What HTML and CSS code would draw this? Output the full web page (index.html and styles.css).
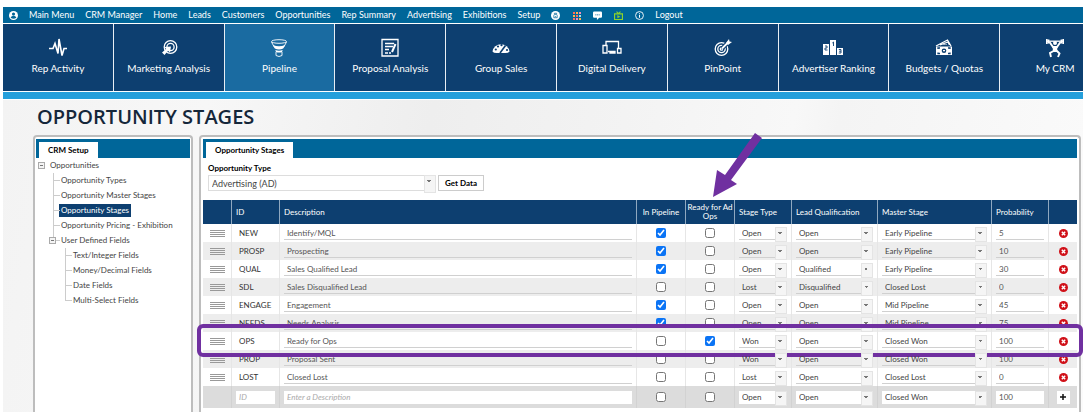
FILE: index.html
```html
<!DOCTYPE html>
<html lang="en">
<head>
<meta charset="utf-8">
<title>Opportunity Stages</title>
<link rel="stylesheet" href="styles.css">
</head>
<body>
<div class="page">
  <nav class="topbar" aria-label="Main">
    <a href="#" class="icon-link" aria-label="Account"><svg class="ic" viewBox="0 0 16 16"><circle cx="8" cy="8" r="8" fill="#fff"/><circle cx="8" cy="5.500" r="2.800" fill="#069"/><path d="M3 12c0-4 10-4 10 0q-5 3.500-10 0" fill="#069"/></svg></a>
    <a href="#">Main Menu</a><a href="#">CRM Manager</a><a href="#">Home</a><a href="#">Leads</a><a href="#">Customers</a><a href="#">Opportunities</a><a href="#">Rep Summary</a><a href="#">Advertising</a><a href="#">Exhibitions</a><a href="#">Setup</a>
    <span class="tools">
      <a href="#" class="icon-link" aria-label="Assistant"><svg class="ic" viewBox="0 0 16 16"><circle cx="8" cy="8" r="8" fill="#fff"/><path d="M6 4h4v3l1 1v4H5V8l1-1zM7 6h2M7 10h2" fill="none" stroke="#069" stroke-width="1.300"/></svg></a>
      <a href="#" class="icon-link" aria-label="Apps"><svg class="ic" viewBox="0 0 9 9"><path d="M1 1h2v2H1zM4 4h2v2H4zM1 7h2v2H1z" fill="#ff6a5c"/><path d="M4 1h2v2H4zM1 4h2v2H1zM7 7h2v2H7z" fill="#ffb347"/><path d="M7 1h2v2H7zM4 7h2v2H4z" fill="#f58cb4"/><path d="M7 4h2v2H7z" fill="#a5dbe8"/></svg></a>
      <a href="#" class="icon-link" aria-label="Chat"><svg class="ic" viewBox="0 0 16 16"><path d="M2 1h12q2 0 2 2v7q0 2-2 2h-3l-4 4v-4H2q-2 0-2-2V3q0-2 2-2z" fill="#fff"/><path d="M4 6h2v1.500H4zM7 6h2v1.500H7zM10 6h2v1.500h-2z" fill="#069"/></svg></a>
      <a href="#" class="icon-link" aria-label="Videos"><svg class="ic" viewBox="0 0 16 16"><path d="M1 5h14v10H1zM4.500 1L8 4.500 11.500 1" fill="none" stroke="#8dd32a" stroke-width="2"/><path d="M6 7l5 3-5 3z" fill="#8dd32a"/></svg></a>
      <a href="#" class="icon-link" aria-label="Information"><svg class="ic" viewBox="0 0 16 16"><circle cx="8" cy="8" r="7" fill="none" stroke="#fff" stroke-width="1.600"/><path d="M8 7v5M8 4v1.800" stroke="#fff" stroke-width="1.800"/></svg></a>
    </span>
    <a href="#">Logout</a>
  </nav>

  <nav class="tiles" aria-label="Modules">
    <a href="#" class="tile"><svg viewBox="0 0 20 20"><path d="M1 10.500h4l2-5 3 10L11 1l3 16.500 2-7h3" stroke-width="1.600"/></svg>Rep Activity</a>
    <a href="#" class="tile"><svg viewBox="0 0 20 20"><circle cx="11.500" cy="9" r="6.300"/><circle cx="11.500" cy="9" r="3.600"/><path class="f" d="M12 8.500l-1 6-2-1.800L5.500 17 3 14.500 7.200 11 5.500 9z"/></svg>Marketing Analysis</a>
    <a href="#" class="tile active"><svg viewBox="0 0 20 20"><ellipse cx="10" cy="3.500" rx="7.500" ry="1.800" stroke-width=".9"/><path d="M2.500 4l3 5.500M17.500 4l-3 5.500M7 14v3.500q3 2 6 0V14" stroke-width=".9"/><path class="f" d="M4 7q6 2.500 12 0l-1.800 3.500q-4.200 2-8.400 0zM6.300 12q3.700 1.500 7.400 0l-.7 2q-3 1.200-6 0z"/></svg>Pipeline</a>
    <a href="#" class="tile"><svg viewBox="0 0 20 20"><path d="M2 1.500h16v16.500H2zM5 5.500h9M5 8.500h8M5 11.500h4M5 15h3M9 15h2"/><path d="M15.500 6L12 14" stroke-width="2"/></svg>Proposal Analysis</a>
    <a href="#" class="tile"><svg viewBox="0 0 20 20"><path class="f" d="M1.500 13.500a8.600 8.600 0 0 1 17 0q-1 1.500-4 1.500h-9q-3 0-4-1.500z"/><g fill="#0d3f70" stroke="none"><circle cx="4.800" cy="11.500" r="1.100"/><circle cx="7" cy="8.500" r="1.100"/><circle cx="10.500" cy="7.200" r="1.100"/><circle cx="16" cy="12" r="1.100"/></g><path d="M9 15l5.500-7.500" stroke="#0d3f70" stroke-width="1.600"/></svg>Group Sales</a>
    <a href="#" class="tile"><svg viewBox="0 0 20 20"><path d="M4 7V3.500h12.500V10M6 13.500h6M1 7.500h4v7.500H1zM15.500 10.500H19V15h-3.500zM8 13.500h5V15H8z"/></svg>Digital Delivery</a>
    <a href="#" class="tile"><svg viewBox="0 0 20 20"><circle cx="8.500" cy="11" r="6.300"/><circle cx="8.500" cy="11" r="3.700"/><circle cx="8.500" cy="11" r="1.200"/><path d="M9 10.500L15.500 4" stroke="#0d3f70" stroke-width="4"/><path d="M9 10.500L15.500 4" stroke-width="1.800"/><path class="f" d="M13 5l3-4 .5 2.500L19 4l-4 3z"/></svg>PinPoint</a>
    <a href="#" class="tile"><svg viewBox="0 0 20 20"><path class="f" d="M0 6h6v11H0zM7 2h6v15H7zM14 10h6v7h-6z"/><path d="M2 8h2v2H2v2h2.500M9.300 5L10.500 4v4M15.800 11.500H18V15h-2.200M16 13.200h2" stroke="#0d3f70" stroke-width=".9"/></svg>Advertiser Ranking</a>
    <a href="#" class="tile"><svg viewBox="0 0 20 20"><path d="M2 8L13.500 2l3.500 6M6 7l8-3 1.500 3M9.500 6.500q2-2 3 0"/><path class="f" d="M2 8.500h16V17H2z"/><ellipse cx="10" cy="12.700" rx="2.300" ry="2.200" fill="#0d3f70" stroke="none"/><path d="M4 11v-1h2M14 10h2v1M4 14.500v1h2M14 15.500h2v-1" stroke="#0d3f70"/><path d="M9 12.700h2"/></svg>Budgets / Quotas</a>
    <a href="#" class="tile"><svg viewBox="0 0 20 20"><path d="M1.800 1v5M3.600 1.500v4M18.200 1v5M16.400 1.500v4" stroke-width="1.600"/><path d="M2 3.200h16"/><circle class="f" cx="10" cy="5" r="2"/><path d="M4.500 4l3.500 5h4l3.500-5M8.500 13l-3.500 2 1 4M11.500 12.500l3 3-1.500 3.500" stroke-width="1.900"/><path class="f" d="M7.500 8.500h5l-.6 5.500H8.100z"/></svg>My CRM</a>
  </nav>
  <div class="stripe"></div>

  <main class="main">
    <h1>OPPORTUNITY STAGES</h1>
    <div class="columns">
      <aside class="panel side">
        <div class="tabs"><span class="tab">CRM Setup</span></div>
        <ul class="tree root">
          <li><span class="node"><i class="toggle"></i><a href="#">Opportunities</a></span>
            <ul class="tree">
              <li><a href="#">Opportunity Types</a></li>
              <li><a href="#">Opportunity Master Stages</a></li>
              <li><a href="#" class="selected">Opportunity Stages</a></li>
              <li><a href="#">Opportunity Pricing - Exhibition</a></li>
              <li class="branch"><span class="node"><i class="toggle"></i><a href="#">User Defined Fields</a></span>
                <ul class="tree">
                  <li><a href="#">Text/Integer Fields</a></li>
                  <li><a href="#">Money/Decimal Fields</a></li>
                  <li><a href="#">Date Fields</a></li>
                  <li><a href="#">Multi-Select Fields</a></li>
                </ul>
              </li>
            </ul>
          </li>
        </ul>
      </aside>

      <section class="panel content">
        <div class="tabs"><span class="tab">Opportunity Stages</span></div>
        <form class="filter">
          <label for="type">Opportunity Type</label>
          <div class="filter-row">
            <span class="pick wide"><select id="type"><option>Advertising (AD)</option></select></span>
            <button type="button" class="get">Get Data</button>
          </div>
        </form>
        <table class="grid">
          <colgroup><col class="c-move"><col class="c-id"><col><col class="c-check"><col class="c-check"><col class="c-type"><col class="c-lead"><col class="c-master"><col class="c-type"><col class="c-end"></colgroup>
          <thead><tr><th></th><th>ID</th><th>Description</th><th class="mid">In Pipeline</th><th class="mid">Ready for Ad Ops</th><th>Stage Type</th><th>Lead Qualification</th><th>Master Stage</th><th>Probability</th><th></th></tr></thead>
          <tbody id="rows"></tbody>
          <tfoot><tr>
            <td></td>
            <td><input class="text" aria-label="New ID" placeholder="ID"></td>
            <td><input class="text" aria-label="New description" placeholder="Enter a Description"></td>
            <td class="mid"><input type="checkbox" aria-label="In pipeline"></td>
            <td class="mid"><input type="checkbox" aria-label="Ready for ad ops"></td>
            <td><span class="pick"><select aria-label="Stage type"><option>Open</option></select></span></td>
            <td><span class="pick"><select aria-label="Lead qualification"><option>Open</option></select></span></td>
            <td><span class="pick"><select aria-label="Master stage"><option>Closed Won</option></select></span></td>
            <td><input class="text" aria-label="Probability" value="100"></td>
            <td class="mid"><button type="button" class="add" aria-label="Add stage"><svg viewBox="0 0 8 8"><path d="M4 0v8M0 4h8" stroke="#111" stroke-width="2"/></svg></button></td>
          </tr></tfoot>
        </table>
        <svg class="arrow" viewBox="0 0 50 64" aria-hidden="true"><path d="M42 0L49 5 18 47 24 51 0 64 4 37 12 42z" fill="#7030a0"/></svg>
      </section>
    </div>
  </main>
</div>
<script src="rows.js"></script>
</body>
</html>
```
FILE: styles.css
```css
* { box-sizing: border-box; }
body {
  margin: 0;
  background: #fff;
  font-family: Lato, "Open Sans", sans-serif;
  font-size: 8px;
  color: #444;
}
a { color: inherit; text-decoration: none; }
input, select, button { font: inherit; color: inherit; margin: 0; border-radius: 0; }

.page {
  height: 100vh;
  padding: 7px 3px 0;
  display: flex;
  flex-direction: column;
  overflow: hidden;
}

.topbar {
  display: flex;
  align-items: center;
  gap: 11px;
  height: 16px;
  padding-left: 6px;
  flex: none;
  background: #069;
  color: #fff;
  font-size: 9px;
  line-height: 16px;
  white-space: nowrap;
}
.icon-link { display: flex; }
.ic { width: 9px; height: 9px; }
.tools { display: flex; gap: 12px; }

.tiles {
  display: grid;
  grid-auto-flow: column;
  grid-auto-columns: 10.26%;
  height: 67px;
  margin-top: 1px;
  flex: none;
  overflow: hidden;
}
.tile {
  display: flex;
  flex-direction: column;
  align-items: center;
  gap: 3px;
  padding-top: 14px;
  background: #0d3f70;
  border-right: 1px solid #e8eef4;
  color: #fff;
  font-size: 10px;
  line-height: 14px;
  white-space: nowrap;
}
.tile svg {
  width: 20px;
  height: 20px;
  fill: none;
  stroke: #fff;
  stroke-width: 1.3;
}
.tile .f { fill: #fff; stroke: none; }
.tile.active { background: #1a6ba1; }
.stripe { height: 7px; margin: 1px 0; background: #259fdb; flex: none; }

.main {
  flex: 1;
  min-height: 0;
  display: flex;
  flex-direction: column;
  padding: 0 2px 0 30px;
  background: linear-gradient(100deg, #f3f3f3 0%, #f7f7f7 18%, #eeeeee 38%, #f2f2f2 52%, #f8f8f8 70%, #f4f4f4 74%, #fbfbfb 100%);
}
h1 {
  margin: 0;
  padding: 3px 4px 4px;
  font-family: "Open Sans", "Noto Sans", sans-serif;
  font-size: 20px;
  line-height: 28px;
  font-weight: 600;
  color: #15273a;
}
.columns { flex: 1; display: flex; gap: 6px; min-height: 0; }
.panel {
  position: relative;
  background: #fff;
  border: 2px solid #bdbdbd;
  border-bottom: 0;
  border-radius: 4px 4px 0 0;
  padding: 2px 2px 0;
}
.side { flex: 0 0 160px; padding: 2px 1px 0; }
.content { flex: 1; min-width: 0; }
.tabs { display: flex; height: 19px; padding: 3px 3px 0; background: #069; }
.tab {
  padding: 0 9px;
  background: #fff;
  color: #000;
  font-weight: 700;
  line-height: 16px;
  white-space: nowrap;
}

.tree { list-style: none; margin: 0; padding: 0 0 0 15px; line-height: 15px; white-space: nowrap; }
.root { padding: 0 0 0 2px; }
.root > li > .tree { padding-left: 15px; }
.node { display: flex; align-items: center; gap: 5px; }
.toggle {
  width: 7px;
  height: 7px;
  border: 1px solid #aaa;
  background: linear-gradient(#777, #777) center / 3px 1px no-repeat #f4f4f4;
}
.tree .tree > li { position: relative; padding-left: 8px; }
.tree .tree > li::before {
  content: "";
  position: absolute;
  left: 0;
  top: 0;
  width: 6px;
  height: 7px;
  border-left: 1px solid #ccc;
  border-bottom: 1px solid #ccc;
}
.tree .tree > li:not(:last-child)::after {
  content: "";
  position: absolute;
  left: 0;
  top: 0;
  height: 100%;
  border-left: 1px solid #ccc;
}
.tree .tree > li.branch { padding-left: 0; }
.tree .tree > li.branch > .node { position: relative; margin-left: -4px; z-index: 1; }
.tree .tree .tree { padding-left: 12px; }
.selected { display: inline-block; padding: 0 2px; margin-left: -2px; line-height: 13px; background: #0d3f70; color: #fff; }

.filter { padding: 4px 5px 9px; }
.filter label { display: block; font-weight: 700; color: #000; line-height: 13px; }
.filter-row { display: flex; gap: 2px; height: 16px; font-size: 9px; }
.get { width: 46px; padding: 0; border: 1px solid #ccc; background: #fff; color: #000; font-weight: 700; font-size: 8px; }

.pick { position: relative; display: flex; height: 13px; }
.pick select {
  appearance: none;
  width: 100%;
  height: 100%;
  padding: 0 12px 0 3px;
  border: 0;
  border-bottom: 1px solid #d0d0d0;
  background: transparent;
  outline: 0;
}
.pick::after {
  content: "";
  position: absolute;
  right: 0;
  top: 0;
  width: 10px;
  height: 100%;
  border: 1px solid #e4e4e4;
  background: conic-gradient(from -45deg at 50% 100%, #777 90deg, transparent 0) 2px 4px / 4px 2px no-repeat #f5f5f5;
  pointer-events: none;
}
.wide { width: 228px; height: 16px; }
.wide select { border: 1px solid #ddd; }

.grid { width: 100%; border-collapse: separate; border-spacing: 0; table-layout: fixed; }
.c-move { width: 29px; }
.c-id { width: 48px; }
.c-check { width: 49px; }
.c-type { width: 57px; }
.c-lead { width: 86px; }
.c-master { width: 114px; }
.c-end { width: 28px; }
.grid th {
  height: 24px;
  padding: 0 4px;
  background: #0d3f70;
  border-right: 1px solid #8fa8c0;
  color: #fff;
  font-weight: 400;
  line-height: 9px;
  text-align: left;
}
.grid td { height: 18px; padding: 0 4px; border-right: 1px solid #e6e6e6; line-height: 12px; vertical-align: middle; }
.grid tbody tr:nth-child(even) { background: #ededed; }
.grid tfoot td { height: 22px; background: #dcdcdc; border-color: #d2d2d2; }
.grid th:last-child, .grid td:last-child { border-right: 0; }
.grid .mid { text-align: center; padding: 0; }
.grid td.key { padding-left: 7px; color: #333; }
.grid input[type="checkbox"] { width: 10px; height: 10px; display: block; margin: 0 auto; accent-color: #0b74f5; }
.handle { display: block; width: 15px; height: 7px; margin: 0 auto; background: repeating-linear-gradient(#999 0 1px, transparent 1px 2px); }
.text { display: block; width: 100%; height: 13px; padding: 0 3px; border: 0; border-bottom: 1px solid #d0d0d0; background: transparent; color: #555; outline: 0; }
tfoot .text, tfoot .pick select { background: #fff; border-color: #fff; }
.text::placeholder { font-style: italic; color: #aaa; }
.delete, .add { display: flex; align-items: center; justify-content: center; margin: 0 auto; padding: 0; border: 0; background: none; }
.delete svg { width: 9px; height: 9px; }
.add { width: 13px; height: 13px; background: #fff; }
.add svg { width: 6px; height: 6px; }

.marked { position: relative; }
.marked td:first-child::after {
  content: "";
  position: absolute;
  inset: -8px -6px -7px;
  border: 4px solid #7030a0;
  border-radius: 6px;
  pointer-events: none;
}
.arrow { position: absolute; right: 316px; top: -4px; width: 50px; height: 64px; }
```
FILE: rows.js
```js
const stages = [
  ["NEW", "Identify/MQL", 1, 0, "Open", "Open", "Early Pipeline", 5],
  ["PROSP", "Prospecting", 1, 0, "Open", "Open", "Early Pipeline", 10],
  ["QUAL", "Sales Qualified Lead", 1, 0, "Open", "Qualified", "Early Pipeline", 30],
  ["SDL", "Sales Disqualified Lead", 0, 0, "Lost", "Disqualified", "Closed Lost", 0],
  ["ENGAGE", "Engagement", 1, 0, "Open", "Open", "Mid Pipeline", 45],
  ["NEEDS", "Needs Analysis", 1, 0, "Open", "Open", "Mid Pipeline", 75],
  ["OPS", "Ready for Ops", 0, 1, "Won", "Open", "Closed Won", 100],
  ["PROP", "Proposal Sent", 0, 0, "Won", "Open", "Closed Won", 100],
  ["LOST", "Closed Lost", 0, 0, "Lost", "Open", "Closed Lost", 0]
];
const check = (on, label) => `<td class="mid"><input type="checkbox" aria-label="${label}"${on ? " checked" : ""}></td>`;
const pick = (value, label) => `<td><span class="pick"><select aria-label="${label}"><option>${value}</option></select></span></td>`;
const text = (value, label) => `<td><input class="text" aria-label="${label}" value="${value}"></td>`;
document.getElementById("rows").innerHTML = stages.map(([id, name, pipe, ops, type, lead, master, prob]) => `
<tr${id === "OPS" ? ' class="marked"' : ""}>
<td class="mid"><span class="handle"></span></td><td class="key">${id}</td>${text(name, id + " description")}
${check(pipe, id + " in pipeline")}${check(ops, id + " ready for ad ops")}
${pick(type, id + " stage type")}${pick(lead, id + " lead qualification")}${pick(master, id + " master stage")}
${text(prob, id + " probability")}
<td class="mid"><button type="button" class="delete" aria-label="Delete ${id}"><svg viewBox="0 0 8 8"><circle cx="4" cy="4" r="4" fill="#d01018"/><path d="M2.500 2.500l3 3m0-3l-3 3" stroke="#fff" stroke-width="1.300"/></svg></button></td>
</tr>`).join("");
```
